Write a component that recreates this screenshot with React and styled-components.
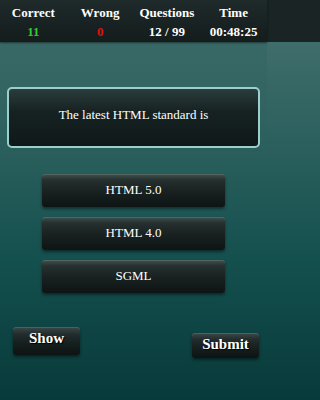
import React from "react";
import styled, { createGlobalStyle } from "styled-components";

const Global = createGlobalStyle`
  html, body { margin: 0; padding: 0; }
  html {
    background: #0c3e3e;
  }
  body {
    min-height: 400px;
    overflow: hidden;
    font-family: "Liberation Serif", "Times New Roman", serif;
    background: linear-gradient(180deg, #1a2424 0px, #1a2424 42px, #3f6d6b 42px, #2c605e 35%, #14504e 65%, #083a3a 100%);
  }
`;

const Screen = styled.div`
  width: 267px;
  height: 400px;
  display: flex;
  flex-direction: column;
  background: linear-gradient(180deg, #3f6d6b 0%, #2c605e 35%, #14504e 65%, #083a3a 100%);
`;

const Header = styled.div`
  height: 42px;
  display: grid;
  grid-template-columns: repeat(4, 1fr);
  background: linear-gradient(180deg, #1f2a2a 0%, #141c1c 100%);
  box-shadow: 0 1px 2px rgba(0, 0, 0, 0.5);
`;

const Stat = styled.div`
  display: flex;
  flex-direction: column;
  align-items: center;
  padding-top: 4px;
  font-weight: bold;
  font-size: 13px;
  line-height: 17px;
`;

const Label = styled.div`
  color: #ffffff;
`;

const Value = styled.div`
  color: ${(p) => p.$color || "#ffffff"};
  margin-top: 2px;
`;

const Question = styled.div`
  margin: 45px 7px 0 7px;
  height: 51px;
  border: 2px solid #9ccfcb;
  border-radius: 5px;
  background: linear-gradient(180deg, #2c3b3b 0%, #162222 40%, #0f1818 100%);
  display: flex;
  align-items: center;
  justify-content: center;
  color: #ffffff;
  font-size: 13px;
  padding-bottom: 6px;
  box-sizing: content-box;
`;

const Options = styled.div`
  margin: 26px auto 0;
  width: 183px;
  display: flex;
  flex-direction: column;
  gap: 10px;
`;

const Option = styled.button`
  height: 33px;
  width: 100%;
  border: none;
  border-radius: 3px;
  background: linear-gradient(180deg, #40524f 0%, #26302f 18%, #182020 55%, #0e1414 100%);
  box-shadow: 0 2px 3px rgba(0, 0, 0, 0.45), inset 0 1px 0 rgba(255, 255, 255, 0.12);
  color: #ffffff;
  font-family: "Liberation Serif", "Times New Roman", serif;
  font-size: 13px;
  padding: 0 0 2px 0;
`;

const Footer = styled.div`
  margin-top: 34px;
  padding: 0 8px 0 13px;
  display: flex;
  justify-content: space-between;
  align-items: flex-start;
`;

const ActionButton = styled.button`
  width: 67px;
  height: ${(p) => p.$h}px;
  margin-top: ${(p) => p.$offset || 0}px;
  border: none;
  border-radius: 3px;
  background: linear-gradient(180deg, #3c4a49 0%, #232d2d 25%, #161e1e 60%, #0d1313 100%);
  box-shadow: 0 2px 3px rgba(0, 0, 0, 0.45), inset 0 1px 0 rgba(255, 255, 255, 0.12);
  color: #ffffff;
  font-family: "Liberation Serif", "Times New Roman", serif;
  font-weight: bold;
  font-size: 15px;
  text-shadow: 1px 1px 1px #000;
  padding: 0 0 ${(p) => p.$pb || 0}px 0;
`;

export default function App() {
  return (
    <>
      <Global />
      <Screen>
        <Header>
          <Stat>
            <Label>Correct</Label>
            <Value $color="#2ecc2e">11</Value>
          </Stat>
          <Stat>
            <Label>Wrong</Label>
            <Value $color="#e01010">0</Value>
          </Stat>
          <Stat>
            <Label>Questions</Label>
            <Value>12 / 99</Value>
          </Stat>
          <Stat>
            <Label>Time</Label>
            <Value>00:48:25</Value>
          </Stat>
        </Header>
        <Question>The latest HTML standard is</Question>
        <Options>
          <Option>HTML 5.0</Option>
          <Option>HTML 4.0</Option>
          <Option>SGML</Option>
        </Options>
        <Footer>
          <ActionButton $h={28} $pb={6}>Show</ActionButton>
          <ActionButton $h={25} $pb={2} $offset={6}>Submit</ActionButton>
        </Footer>
      </Screen>
    </>
  );
}
